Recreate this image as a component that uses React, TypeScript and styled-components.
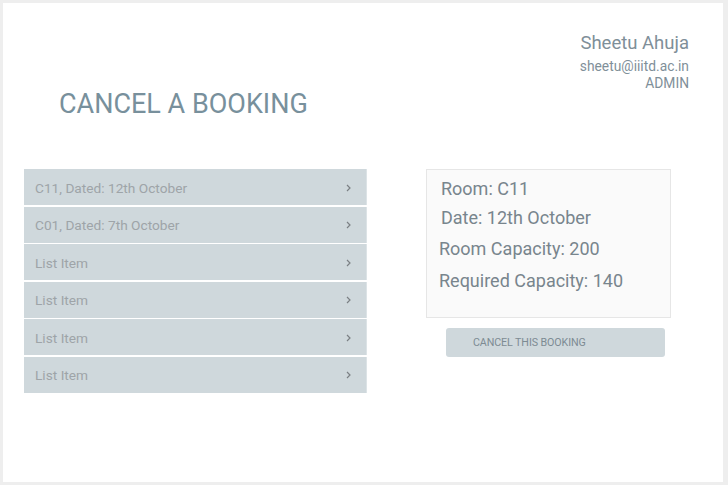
import React from "react";
import styled, { createGlobalStyle } from "styled-components";

const Global = createGlobalStyle`
  html, body { margin: 0; padding: 0; }
  body {
    background: #eeeeee;
    font-family: Roboto, "Liberation Sans", sans-serif;
  }
`;

const Frame = styled.div`
  padding: 3px 5px 3px 3px;
  width: 728px;
  height: 485px;
  box-sizing: border-box;
`;

const Panel = styled.div`
  background: #ffffff;
  width: 720px;
  height: 479px;
  box-sizing: border-box;
  padding: 30px 34px 0 21px;
  display: flex;
  flex-direction: column;
`;

const Header = styled.header`
  display: flex;
  justify-content: space-between;
  align-items: flex-start;
  height: 90px;
`;

const Title = styled.h1`
  margin: 55px 0 0 35px;
  font-size: 27px;
  line-height: 32px;
  font-weight: 400;
  color: #78909c;
`;

const User = styled.div`
  display: flex;
  flex-direction: column;
  align-items: flex-end;
  text-align: right;
`;

const Name = styled.div`
  font-size: 18.5px;
  line-height: 21px;
  color: #7f8f99;
`;

const Meta = styled.div<{ $mt: number }>`
  font-size: 13.8px;
  line-height: 15px;
  color: #7f8f99;
  margin-top: ${(p) => p.$mt}px;
`;

const Content = styled.main`
  display: flex;
  align-items: flex-start;
  gap: 59px;
  margin-top: 46px;
`;

const List = styled.ul`
  list-style: none;
  margin: 0;
  padding: 0;
  width: 343px;
  display: flex;
  flex-direction: column;
  gap: 1.5px;
`;

const Item = styled.li`
  height: 36px;
  box-sizing: border-box;
  background: #cfd8dc;
  border-right: 1px solid #dce3e6;
  display: flex;
  align-items: center;
  justify-content: space-between;
  padding: 1px 15px 0 11px;
  font-size: 13.7px;
  color: #9ea4a8;
`;

const Chevron = () => (
  <svg width="5" height="8" viewBox="0 0 5 8" fill="none">
    <polyline points="1,1 4,4 1,7" stroke="#7b8084" strokeWidth="1.2" />
  </svg>
);

const Side = styled.section`
  display: flex;
  flex-direction: column;
`;

const Card = styled.div`
  width: 245px;
  height: 149px;
  box-sizing: border-box;
  background: #fafafa;
  border: 1px solid #e6e6e6;
  padding: 8px 0 0 0;
  display: flex;
  flex-direction: column;
`;

const Line = styled.div<{ $mt: number; $ml: number }>`
  font-size: 18px;
  line-height: 22px;
  margin-top: ${(p) => p.$mt}px;
  margin-left: ${(p) => p.$ml}px;
  color: #78858d;
`;

const Button = styled.button`
  margin: 10px 0 0 20px;
  width: 219px;
  height: 29px;
  border: none;
  border-radius: 3px;
  background: #cfd8dc;
  color: #7d8b93;
  font-family: Roboto, "Liberation Sans", sans-serif;
  font-size: 10.7px;
  text-align: left;
  padding: 0 0 0 27px;
  letter-spacing: -0.1px;
`;

const items = [
  "C11, Dated: 12th October",
  "C01, Dated: 7th October",
  "List Item",
  "List Item",
  "List Item",
  "List Item",
];

const lines = [
  { text: "Room: C11", mt: 0, ml: 14 },
  { text: "Date: 12th October", mt: 7, ml: 14 },
  { text: "Room Capacity: 200", mt: 9, ml: 12 },
  { text: "Required Capacity: 140", mt: 10, ml: 12 },
];

export default function App() {
  return (
    <>
      <Global />
      <Frame>
        <Panel>
          <Header>
            <Title>CANCEL A BOOKING</Title>
            <User>
              <Name>Sheetu Ahuja</Name>
              <Meta $mt={5}>sheetu@iiitd.ac.in</Meta>
              <Meta $mt={2}>ADMIN</Meta>
            </User>
          </Header>
          <Content>
            <List>
              {items.map((t, i) => (
                <Item key={i}>
                  <span>{t}</span>
                  <Chevron />
                </Item>
              ))}
            </List>
            <Side>
              <Card>
                {lines.map((l, i) => (
                  <Line key={i} $mt={l.mt} $ml={l.ml}>
                    {l.text}
                  </Line>
                ))}
              </Card>
              <Button>CANCEL THIS BOOKING</Button>
            </Side>
          </Content>
        </Panel>
      </Frame>
    </>
  );
}
